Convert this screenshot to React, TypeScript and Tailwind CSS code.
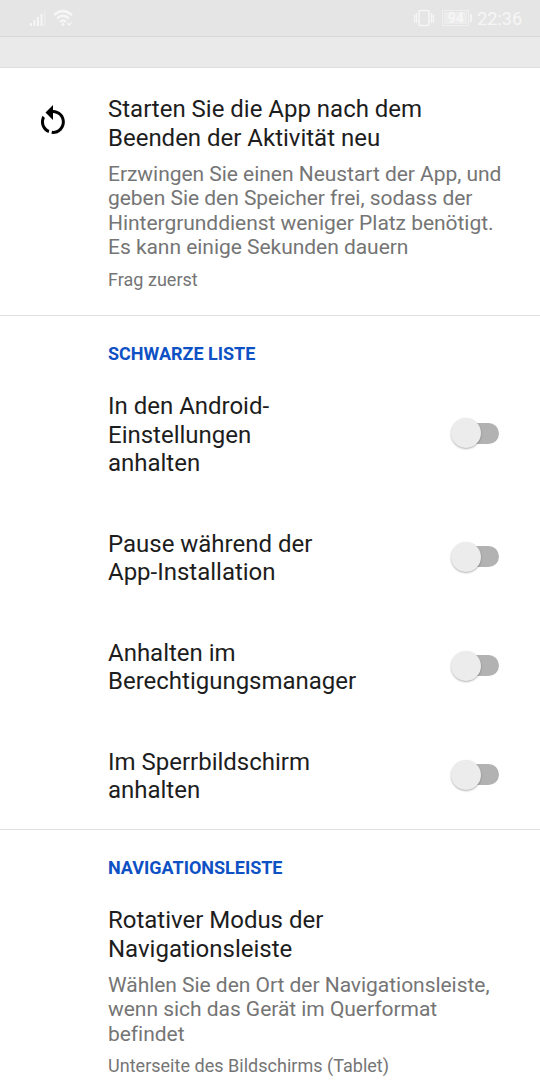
import React from "react";

function Lines({ lines }: { lines: string[] }) {
  return (
    <>
      {lines.map((line) => (
        <span key={line} className="block whitespace-nowrap">
          {line}
        </span>
      ))}
    </>
  );
}

function Title({ lines }: { lines: string[] }) {
  return (
    <h2 className="text-[24px] leading-[28.5px] tracking-[-0.01px] text-[#1d1d1d]">
      <Lines lines={lines} />
    </h2>
  );
}

function Summary({ lines }: { lines: string[] }) {
  return (
    <p className="text-[21px] leading-[24.6px] tracking-[-0.035px] text-[#757575]">
      <Lines lines={lines} />
    </p>
  );
}

function SectionHeader({ children }: { children: string }) {
  return (
    <h3 className="pl-[108px] pt-[25.5px] text-[18px] leading-6 font-bold tracking-[-0.01px] text-[#0e51c4]">{children}</h3>
  );
}

function Switch() {
  return (
    <button role="switch" aria-checked="false" className="mb-[3px] flex h-8 w-12 items-center">
      <span className="z-10 size-[30px] shrink-0 rounded-full bg-[#ececec] shadow-[0_1px_2px_rgba(0,0,0,0.3)]" />
      <span className="-ml-5 h-[21px] w-[38px] shrink-0 rounded-full bg-[#b2b2b2]" />
    </button>
  );
}

function SwitchRow({ lines }: { lines: string[] }) {
  return (
    <div className="flex items-center justify-between pr-[41px] pl-[108px]">
      <Title lines={lines} />
      <Switch />
    </div>
  );
}

function StatusBar() {
  return (
    <header className="flex h-[37px] items-center justify-between border-b border-[#d8d8d8] bg-[#e5e5e5] pr-[18px] pl-[29px] text-[#f6f6f6]">
      <div className="flex items-center gap-[7px]">
        <svg width="17" height="18" viewBox="0 0 17 18" fill="currentColor">
          <path d="M1 14h2v3H1zM4.5 11h2v6h-2zM8 8h2v9H8zM11.5 5h2v12h-2z" />
          <path d="M15 2h1.5v15H15z" opacity="0.5" />
        </svg>
        <svg width="20" height="18" viewBox="0 0 20 18" fill="none" stroke="currentColor" strokeWidth="2.4">
          <path d="M1 6Q10-2 19 6M4 9.5Q10 4 16 9.5M7 13Q10 10 13 13" />
          <circle cx="10" cy="15.5" r="1.4" fill="currentColor" stroke="none" />
          <path d="M14 14l2 2 2.5-2.5" strokeWidth="1.3" />
        </svg>
      </div>
      <div className="flex items-center">
        <svg width="22" height="18" viewBox="0 0 22 18" fill="none" stroke="currentColor" strokeWidth="1.6">
          <rect x="6" y="1.5" width="10" height="15" rx="1.5" />
          <path d="M3.5 4v10M18.5 4v10M1 5.5l1 2-1 2 1 2-1 2M21 5.5l-1 2 1 2-1 2 1 2" strokeWidth="1.2" />
        </svg>
        <div className="ml-[7px] flex h-4 w-[27px] items-center justify-center border border-[#efefef] p-px">
          <span className="flex h-full w-full items-center justify-center bg-[#ececec] font-[Roboto,sans-serif] text-[14px] leading-none font-bold">
            94
          </span>
        </div>
        <span className="ml-px h-2 w-[2px] bg-[#f3f3f3]" />
        <span className="ml-[5px] pt-px font-[Roboto,sans-serif] text-[18px] leading-5">22:36</span>
      </div>
    </header>
  );
}

export default function App() {
  return (
    <div className="flex h-[1080px] w-[540px] flex-col overflow-hidden bg-white font-[Roboto,sans-serif]">
      <StatusBar />
      <div className="h-[31px] shrink-0 border-b border-[#e0e0e0] bg-[#eaeaea]" />
      <main>
        <section className="h-[248px] border-b border-[#e0e0e0] pt-[27px]">
          <div className="flex">
            <div className="w-[108px] shrink-0 pt-[8.5px] pl-[34.5px]">
              <svg width="36" height="36" viewBox="0 0 24 24" className="fill-black">
                <path d="M12,4C14.1,4 16.1,4.8 17.6,6.3C20.7,9.4 20.7,14.5 17.6,17.6C15.8,19.5 13.3,20.2 10.9,19.9L11.4,17.9C13.1,18.1 14.9,17.5 16.2,16.2C18.5,13.9 18.5,10.1 16.2,7.7C15.1,6.6 13.5,6 12,6V10.6L7,5.6L12,0.6V4M6.3,17.6C3.7,15 3.3,11 5.1,7.9L6.6,9.4C5.5,11.6 5.9,14.4 7.8,16.2C8.3,16.7 8.9,17.1 9.6,17.4L9,19.4C8,19 7.1,18.4 6.3,17.6Z" />
              </svg>
            </div>
            <div className="flex flex-col">
              <Title lines={["Starten Sie die App nach dem", "Beenden der Aktivität neu"]} />
              <div className="pt-[9.7px]">
                <Summary
                  lines={[
                    "Erzwingen Sie einen Neustart der App, und",
                    "geben Sie den Speicher frei, sodass der",
                    "Hintergrunddienst weniger Platz benötigt.",
                    "Es kann einige Sekunden dauern",
                  ]}
                />
              </div>
              <p className="pt-[9px] text-[18px] leading-[22px] tracking-[0.02px] text-[#757575]">Frag zuerst</p>
            </div>
          </div>
        </section>
        <section className="h-[514px] border-b border-[#e0e0e0]">
          <SectionHeader>SCHWARZE LISTE</SectionHeader>
          <div className="flex flex-col gap-[52px] pt-[26.5px]">
            <SwitchRow lines={["In den Android-", "Einstellungen", "anhalten"]} />
            <SwitchRow lines={["Pause während der", "App-Installation"]} />
            <SwitchRow lines={["Anhalten im", "Berechtigungsmanager"]} />
            <SwitchRow lines={["Im Sperrbildschirm", "anhalten"]} />
          </div>
        </section>
        <section>
          <SectionHeader>NAVIGATIONSLEISTE</SectionHeader>
          <div className="pt-[26.5px] pl-[108px]">
            <Title lines={["Rotativer Modus der", "Navigationsleiste"]} />
            <div className="pt-[9.7px]">
              <Summary
                lines={[
                  "Wählen Sie den Ort der Navigationsleiste,",
                  "wenn sich das Gerät im Querformat",
                  "befindet",
                ]}
              />
            </div>
            <p className="pt-[9px] text-[18px] leading-[22px] tracking-[0.02px] text-[#757575]">Unterseite des Bildschirms (Tablet)</p>
          </div>
        </section>
      </main>
    </div>
  );
}
